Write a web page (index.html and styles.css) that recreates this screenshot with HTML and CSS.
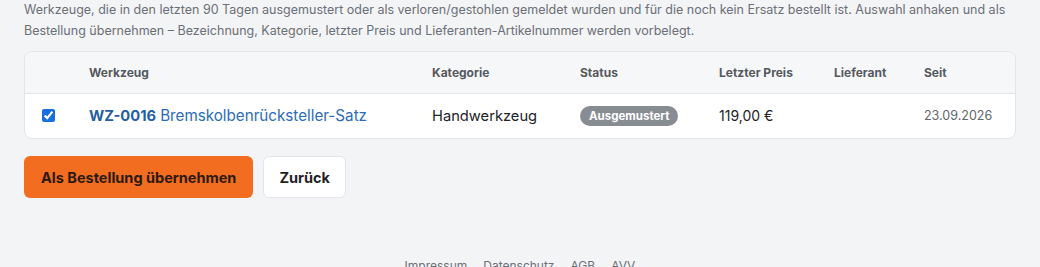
FILE: index.html
```html
<!DOCTYPE html>
<html lang="de">
<head>
    <meta charset="UTF-8">
    <title>Ersatzbestellung</title>
    <link rel="stylesheet" href="styles.css">
</head>
<body>
    <main class="page">
        <p class="intro">Werkzeuge, die in den letzten 90 Tagen ausgemustert oder als verloren/gestohlen gemeldet wurden und für die noch kein Ersatz bestellt ist. Auswahl anhaken und als Bestellung übernehmen – Bezeichnung, Kategorie, letzter Preis und Lieferanten-Artikelnummer werden vorbelegt.</p>

        <div class="card">
            <table class="tools">
                <thead>
                    <tr>
                        <th class="col-check"></th>
                        <th class="col-tool">Werkzeug</th>
                        <th class="col-cat">Kategorie</th>
                        <th class="col-status">Status</th>
                        <th class="col-price">Letzter Preis</th>
                        <th class="col-supplier">Lieferant</th>
                        <th class="col-since">Seit</th>
                    </tr>
                </thead>
                <tbody>
                    <tr>
                        <td class="col-check"><input type="checkbox" checked></td>
                        <td class="col-tool"><a href="#" class="tool-link"><strong>WZ-0016</strong> <span class="tool-name">Bremskolbenrücksteller-Satz</span></a></td>
                        <td class="col-cat">Handwerkzeug</td>
                        <td class="col-status"><span class="badge">Ausgemustert</span></td>
                        <td class="col-price">119,00 €</td>
                        <td class="col-supplier"></td>
                        <td class="col-since muted">23.09.2026</td>
                    </tr>
                </tbody>
            </table>
        </div>

        <div class="actions">
            <button class="btn btn-primary">Als Bestellung übernehmen</button>
            <button class="btn btn-light">Zurück</button>
        </div>
    </main>

    <footer class="footer">
        <a href="#">Impressum</a>
        <a href="#">Datenschutz</a>
        <a href="#">AGB</a>
        <a href="#">AVV</a>
    </footer>
</body>
</html>
```

FILE: styles.css
```css
* {
    margin: 0;
    padding: 0;
    box-sizing: border-box;
}

body {
    background: #f3f4f6;
    font-family: Inter, "Noto Sans", sans-serif;
    color: #1f2328;
}

.page {
    padding: 0 24px;
}

.intro {
    font-size: 12.5px;
    line-height: 21px;
    color: #6b6f76;
    margin-top: -1px;
}

.card {
    margin-top: 10px;
    background: #fff;
    border: 1px solid #e3e5e8;
    border-radius: 8px;
    overflow: hidden;
}

.tools {
    width: 100%;
    border-collapse: collapse;
}

.tools th {
    background: #f6f7f8;
    height: 41px;
    text-align: left;
    font-size: 12px;
    font-weight: 700;
    color: #55595f;
    border-bottom: 1px solid #e3e5e8;
}

.tools td {
    height: 45px;
    font-size: 14px;
    color: #212428;
}

.col-check {
    width: 64px;
    padding-left: 17px;
}

.col-check input {
    width: 13px;
    height: 13px;
    accent-color: #1a6fe0;
    display: block;
}

.col-tool { width: 343px; }
.col-cat { width: 148px; }
.col-status { width: 139px; }
.col-price { width: 115px; }
.col-supplier { width: 90px; }

.tools td.col-tool,
.tools td.col-cat {
    font-size: 14.7px;
}

.tool-link {
    color: #2b6cb8;
    text-decoration: none;
}

.tool-link strong {
    font-weight: 700;
    color: #245ea3;
}

.tool-name {
    font-size: 15.2px;
}

.badge {
    display: inline-block;
    background: #878c93;
    color: #fff;
    font-size: 11.5px;
    font-weight: 700;
    padding: 3px 9px;
    border-radius: 11px;
}

.tools td.muted {
    font-size: 12.5px;
    color: #62666c;
}

.actions {
    display: flex;
    gap: 10px;
    margin-top: 17px;
}

.btn {
    height: 42px;
    font-family: inherit;
    font-size: 14.5px;
    font-weight: 700;
    border-radius: 6px;
    cursor: pointer;
}

.btn-primary {
    background: #f26d1f;
    color: #2a1a10;
    border: none;
    padding: 0 17px;
}

.btn-light {
    background: #fff;
    color: #1f2328;
    border: 1px solid #e3e5e8;
    padding: 0 15px;
}

.footer {
    display: flex;
    justify-content: center;
    gap: 16px;
    margin-top: 60px;
}

.footer a {
    font-size: 12px;
    color: #6b6f76;
    text-decoration: none;
}
```
